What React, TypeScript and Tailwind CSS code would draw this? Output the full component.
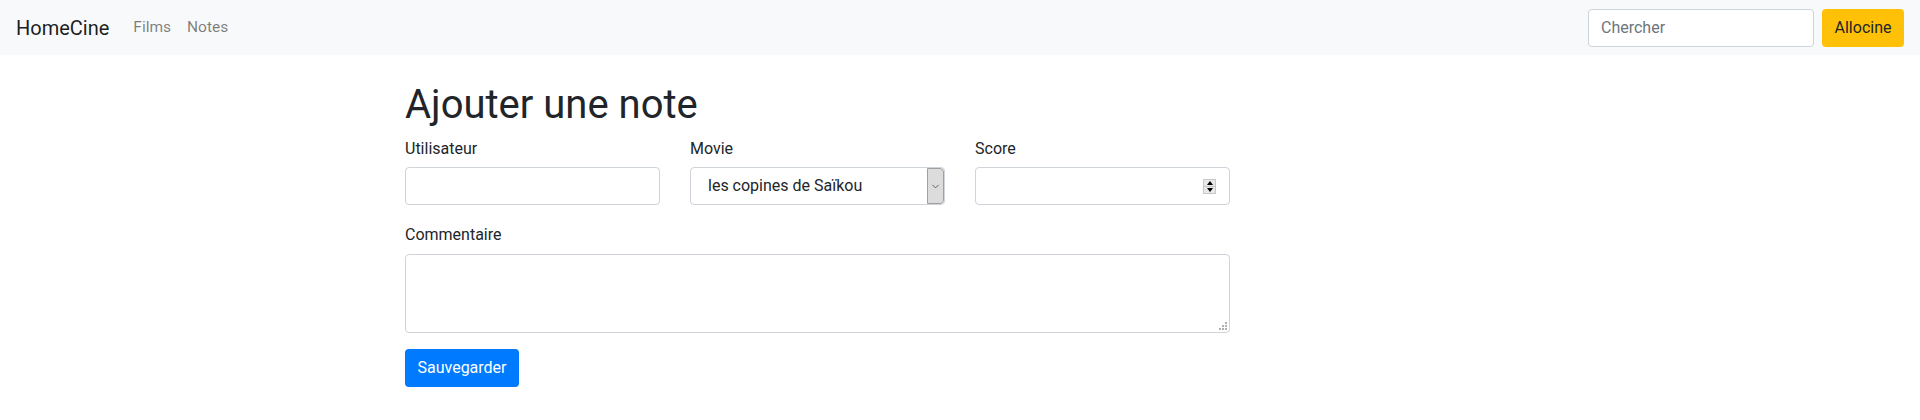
import { ChevronDown } from 'lucide-react';

const font = { fontFamily: '"Segoe UI", Roboto, "Liberation Sans", sans-serif' };

function Field({ label, children }: { label: string; children: React.ReactNode }) {
  return (
    <div className="flex w-[255px] flex-col">
      <label className="mb-[6px] text-base leading-6 text-[#212529]">{label}</label>
      {children}
    </div>
  );
}

export default function App() {
  return (
    <div className="min-h-screen bg-white text-[#212529]" style={font}>
      <nav className="flex h-[55px] items-center justify-between bg-[#f8f9fa] px-4">
        <div className="flex items-center">
          <span className="mr-4 text-[20px] leading-[30px] text-black/90">HomeCine</span>
          <a className="px-2 text-[15.5px] text-black/50">Films</a>
          <a className="px-2 text-[15.5px] text-black/50">Notes</a>
        </div>
        <div className="flex items-center">
          <input
            placeholder="Chercher"
            className="mr-2 h-[38px] w-[226px] rounded border border-[#ced4da] bg-white px-3 text-base placeholder:text-[#6c757d] outline-none"
          />
          <button className="h-[38px] w-[82px] rounded bg-[#ffc107] text-base text-[#212529]">Allocine</button>
        </div>
      </nav>

      <div className="ml-[405px] mt-[26px] w-[825px]">
        <h1 className="mb-2 text-[40px] leading-[48px] font-normal">Ajouter une note</h1>

        <div className="mb-[18px] flex gap-[30px]">
          <Field label="Utilisateur">
            <div className="h-[38px] rounded border border-[#ced4da] bg-white" />
          </Field>
          <Field label="Movie">
            <div className="flex h-[38px] items-stretch rounded border border-[#ced4da] bg-white">
              <span className="flex flex-1 items-center pl-[17px] text-base">les copines de Saïkou</span>
              <span className="flex w-[17px] items-center justify-center rounded-r border border-[#a0a0a0] bg-[#dcdcdc]">
                <ChevronDown className="h-[11px] w-[11px] text-[#444]" strokeWidth={1.75} />
              </span>
            </div>
          </Field>
          <Field label="Score">
            <div className="flex h-[38px] items-center justify-end rounded border border-[#ced4da] bg-white pr-[13px]">
              <div className="flex h-[15px] w-[13px] flex-col border border-[#c8c8c8] bg-[#e8e8e8]">
                <div className="flex flex-1 items-center justify-center border-b border-[#c8c8c8]">
                  <div className="h-0 w-0 border-x-[3px] border-b-[4px] border-x-transparent border-b-black" />
                </div>
                <div className="flex flex-1 items-center justify-center">
                  <div className="h-0 w-0 border-x-[3px] border-t-[4px] border-x-transparent border-t-black" />
                </div>
              </div>
            </div>
          </Field>
        </div>

        <div className="mb-4 flex flex-col">
          <label className="mb-[7px] text-base leading-6">Commentaire</label>
          <div className="relative h-[79px] rounded border border-[#ced4da] bg-white">
            <div className="absolute bottom-[2px] right-[2px] grid grid-cols-3 gap-[1px]">
              <span />
              <span />
              <span className="h-[2px] w-[2px] bg-[#b0b0b0]" />
              <span />
              <span className="h-[2px] w-[2px] bg-[#b0b0b0]" />
              <span className="h-[2px] w-[2px] bg-[#b0b0b0]" />
              <span className="h-[2px] w-[2px] bg-[#b0b0b0]" />
              <span className="h-[2px] w-[2px] bg-[#b0b0b0]" />
              <span className="h-[2px] w-[2px] bg-[#b0b0b0]" />
            </div>
          </div>
        </div>

        <button className="h-[38px] w-[114px] rounded bg-[#007bff] text-base text-white">Sauvegarder</button>
      </div>
    </div>
  );
}
